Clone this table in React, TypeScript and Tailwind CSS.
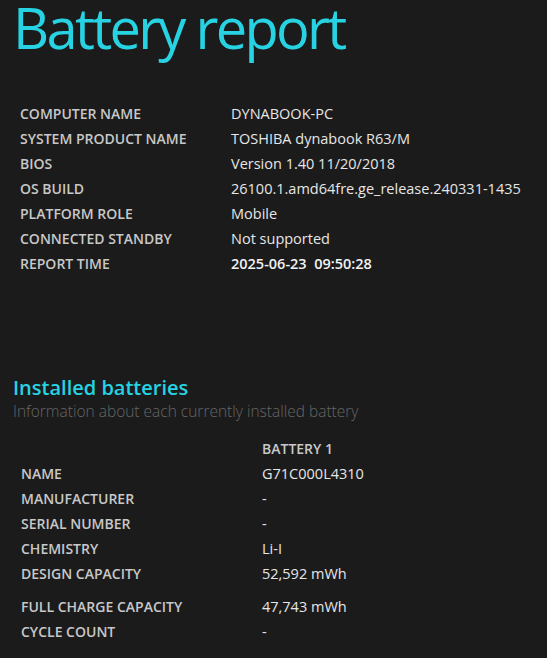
const sysInfo: [string, string, boolean?][] = [
  ['COMPUTER NAME', 'DYNABOOK-PC'],
  ['SYSTEM PRODUCT NAME', 'TOSHIBA dynabook R63/M'],
  ['BIOS', 'Version 1.40 11/20/2018'],
  ['OS BUILD', '26100.1.amd64fre.ge_release.240331-1435'],
  ['PLATFORM ROLE', 'Mobile'],
  ['CONNECTED STANDBY', 'Not supported'],
  ['REPORT TIME', '2025-06-23\u00a0\u00a009:50:28', true],
];

const battery: [string, string][] = [
  ['NAME', 'G71C000L4310'],
  ['MANUFACTURER', '-'],
  ['SERIAL NUMBER', '-'],
  ['CHEMISTRY', 'Li-I'],
  ['DESIGN CAPACITY', '52,592 mWh'],
];

const battery2: [string, string][] = [
  ['FULL CHARGE CAPACITY', '47,743 mWh'],
  ['CYCLE COUNT', '-'],
];

const App = () => {
  return (
    <div
      className="w-[547px] h-[658px] overflow-hidden bg-[#1b1b1b] text-[#e6e6e6]"
      style={{ fontFamily: '"Open Sans", "Noto Sans", sans-serif' }}
    >
      {/* Title */}
      <h1 className="pl-[13px] text-[56px] leading-[54px] text-[#27d3e2] tracking-[-2.7px]">
        Battery report
      </h1>

      {/* System info */}
      <div className="mt-[47px] pl-[20px]">
        {sysInfo.map(([label, value, bold]) => (
          <div key={label} className="flex h-[25px] items-center">
            <div className="w-[211px] text-[14px] font-semibold text-[#c8c8c8]">{label}</div>
            <div className={`text-[14.5px] ${bold ? 'font-semibold text-[#f2f2f2]' : 'text-[#e6e6e6]'}`}>{value}</div>
          </div>
        ))}
      </div>

      {/* Installed batteries */}
      <div className="mt-[99px] pl-[13px]">
        <h2 className="text-[20px] leading-[26px] font-semibold text-[#27d3e2]">Installed batteries</h2>
        <p className="text-[15.5px] leading-[21px] font-light text-[#666666]">
          Information about each currently installed battery
        </p>
      </div>

      <div className="mt-[14px] pl-[21px]">
        <div className="flex h-[25px] items-center">
          <div className="w-[241px]" />
          <div className="text-[14px] font-semibold text-[#c8c8c8]">BATTERY 1</div>
        </div>
        {battery.map(([label, value]) => (
          <div key={label} className="flex h-[25px] items-center">
            <div className="w-[241px] text-[14px] font-semibold text-[#c8c8c8]">{label}</div>
            <div className="text-[14.5px] text-[#e6e6e6]">{value}</div>
          </div>
        ))}
        <div className="mt-[8px]">
          {battery2.map(([label, value]) => (
            <div key={label} className="flex h-[25px] items-center">
              <div className="w-[241px] text-[14px] font-semibold text-[#c8c8c8]">{label}</div>
              <div className="text-[14.5px] text-[#e6e6e6]">{value}</div>
            </div>
          ))}
        </div>
      </div>
    </div>
  );
};

export default App;
